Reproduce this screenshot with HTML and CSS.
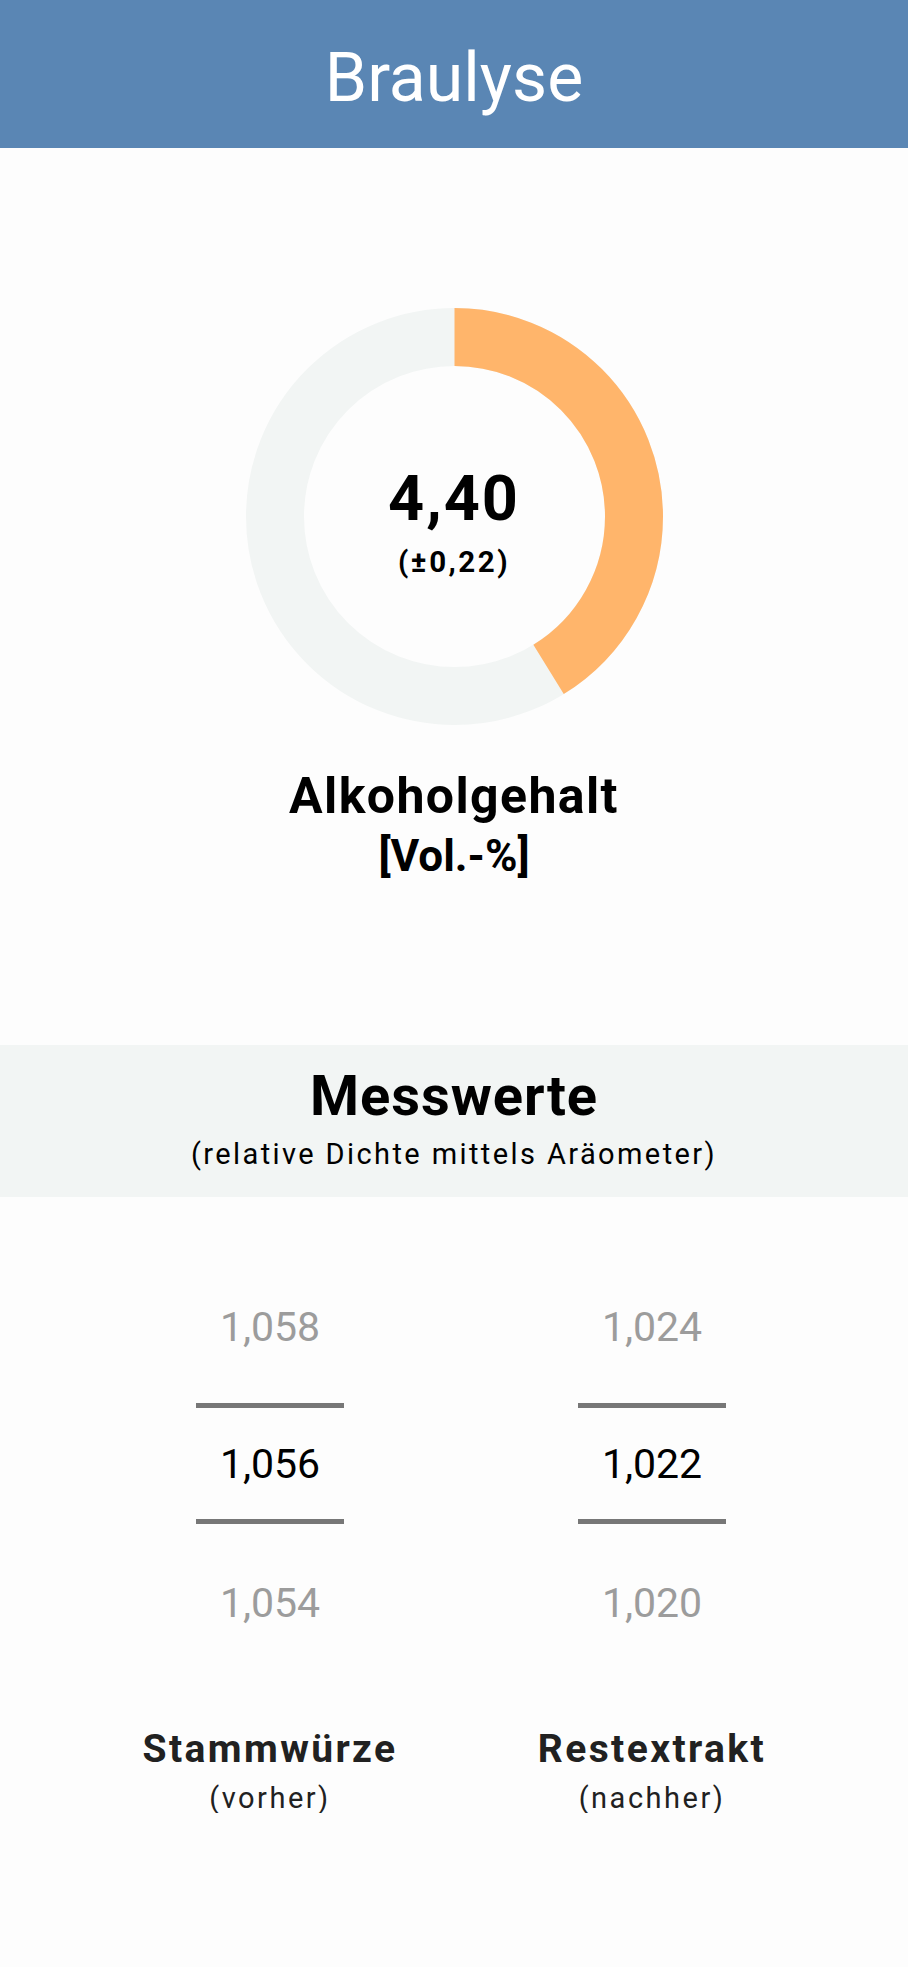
FILE: index.html
```html
<!DOCTYPE html>
<html lang="de">
<head>
<meta charset="utf-8">
<title>Braulyse</title>
<link rel="stylesheet" href="styles.css">
</head>
<body>
<header class="appbar"><h1 class="appbar-title">Braulyse</h1></header>
<main>
  <section class="result">
    <div class="donut">
      <svg class="donut-svg" width="417" height="417" viewBox="0 0 417 417">
        <circle cx="208.5" cy="208.5" r="179.5" fill="none" stroke="#F2F5F4" stroke-width="58"/>
        <circle cx="208.5" cy="208.5" r="179.5" fill="none" stroke="#FFB56B" stroke-width="58" stroke-dasharray="464.7 1127.8" transform="rotate(-90 208.5 208.5)"/>
      </svg>
      <div class="donut-text">
        <div class="abv">4,40</div>
        <div class="abv-err">(±0,22)</div>
      </div>
    </div>
    <div class="result-label">Alkoholgehalt</div>
    <div class="result-unit">[Vol.-%]</div>
  </section>
  <section class="band">
    <div class="band-title">Messwerte</div>
    <div class="band-sub">(relative Dichte mittels Aräometer)</div>
  </section>
  <section class="pickers">
    <div class="picker-col">
      <div class="picker">
        <div class="cell cell-top dim">1,058</div>
        <div class="cell cell-mid">1,056</div>
        <div class="cell cell-bot dim">1,054</div>
      </div>
      <div class="col-label">Stammwürze</div>
      <div class="col-sub">(vorher)</div>
    </div>
    <div class="picker-col">
      <div class="picker">
        <div class="cell cell-top dim">1,024</div>
        <div class="cell cell-mid">1,022</div>
        <div class="cell cell-bot dim">1,020</div>
      </div>
      <div class="col-label">Restextrakt</div>
      <div class="col-sub">(nachher)</div>
    </div>
  </section>
</main>
</body>
</html>
```
FILE: styles.css
```css
* { box-sizing: border-box; }
html, body {
  margin: 0;
  padding: 0;
  background: #FDFDFD;
  font-family: Roboto, "Liberation Sans", sans-serif;
  color: #000;
}
.appbar {
  height: 148px;
  background: #5A86B4;
  padding-top: 44px;
}
.appbar-title {
  margin: 0;
  font-size: 68px;
  font-weight: 400;
  line-height: 68px;
  color: #fff;
  text-align: center;
}
.result {
  display: flex;
  flex-direction: column;
  align-items: center;
  padding-top: 160px;
}
.donut {
  display: grid;
  width: 417px;
  height: 417px;
}
.donut-svg, .donut-text {
  grid-area: 1 / 1;
}
.donut-text {
  padding-top: 159px;
  text-align: center;
}
.abv {
  font-size: 63px;
  line-height: 63px;
  font-weight: 700;
  letter-spacing: 2px;
}
.abv-err {
  margin-top: 18px;
  font-size: 29.5px;
  line-height: 29.5px;
  font-weight: 700;
  letter-spacing: 2.5px;
}
.result-label {
  margin-top: 45.6px;
  font-size: 50px;
  line-height: 50px;
  font-weight: 700;
  letter-spacing: 1.4px;
}
.result-unit {
  margin-top: 13px;
  font-size: 44px;
  line-height: 44px;
  font-weight: 700;
  letter-spacing: 0;
}
.band {
  margin-top: 167px;
  height: 152px;
  background: #F2F5F4;
  padding-top: 23.6px;
  text-align: center;
}
.band-title {
  font-size: 56px;
  line-height: 56px;
  font-weight: 700;
  letter-spacing: 1px;
}
.band-sub {
  margin-top: 16px;
  font-size: 29px;
  line-height: 29px;
  letter-spacing: 2.4px;
}
.pickers {
  display: flex;
  justify-content: center;
  gap: 82px;
  padding-left: 14px;
  margin-top: 55px;
}
.picker-col {
  width: 300px;
  display: flex;
  flex-direction: column;
  align-items: center;
}
.picker {
  width: 148px;
  display: flex;
  flex-direction: column;
}
.cell {
  text-align: center;
  font-size: 41px;
  color: #000;
}
.cell.dim { color: #9C9C9C; }
.cell-top { height: 151px; line-height: 151px; }
.cell-mid {
  height: 121px;
  line-height: 111px;
  padding-top: 1.5px;
  border-top: 5px solid #777;
  border-bottom: 5px solid #777;
}
.cell-bot { height: 159px; line-height: 159px; }
.col-label {
  margin-top: 47px;
  font-size: 39px;
  line-height: 39px;
  font-weight: 700;
  color: #212121;
  letter-spacing: 2.4px;
  white-space: nowrap;
}
.col-sub {
  margin-top: 15.4px;
  font-size: 29px;
  line-height: 29px;
  color: #212121;
  letter-spacing: 2.5px;
  white-space: nowrap;
}
```
